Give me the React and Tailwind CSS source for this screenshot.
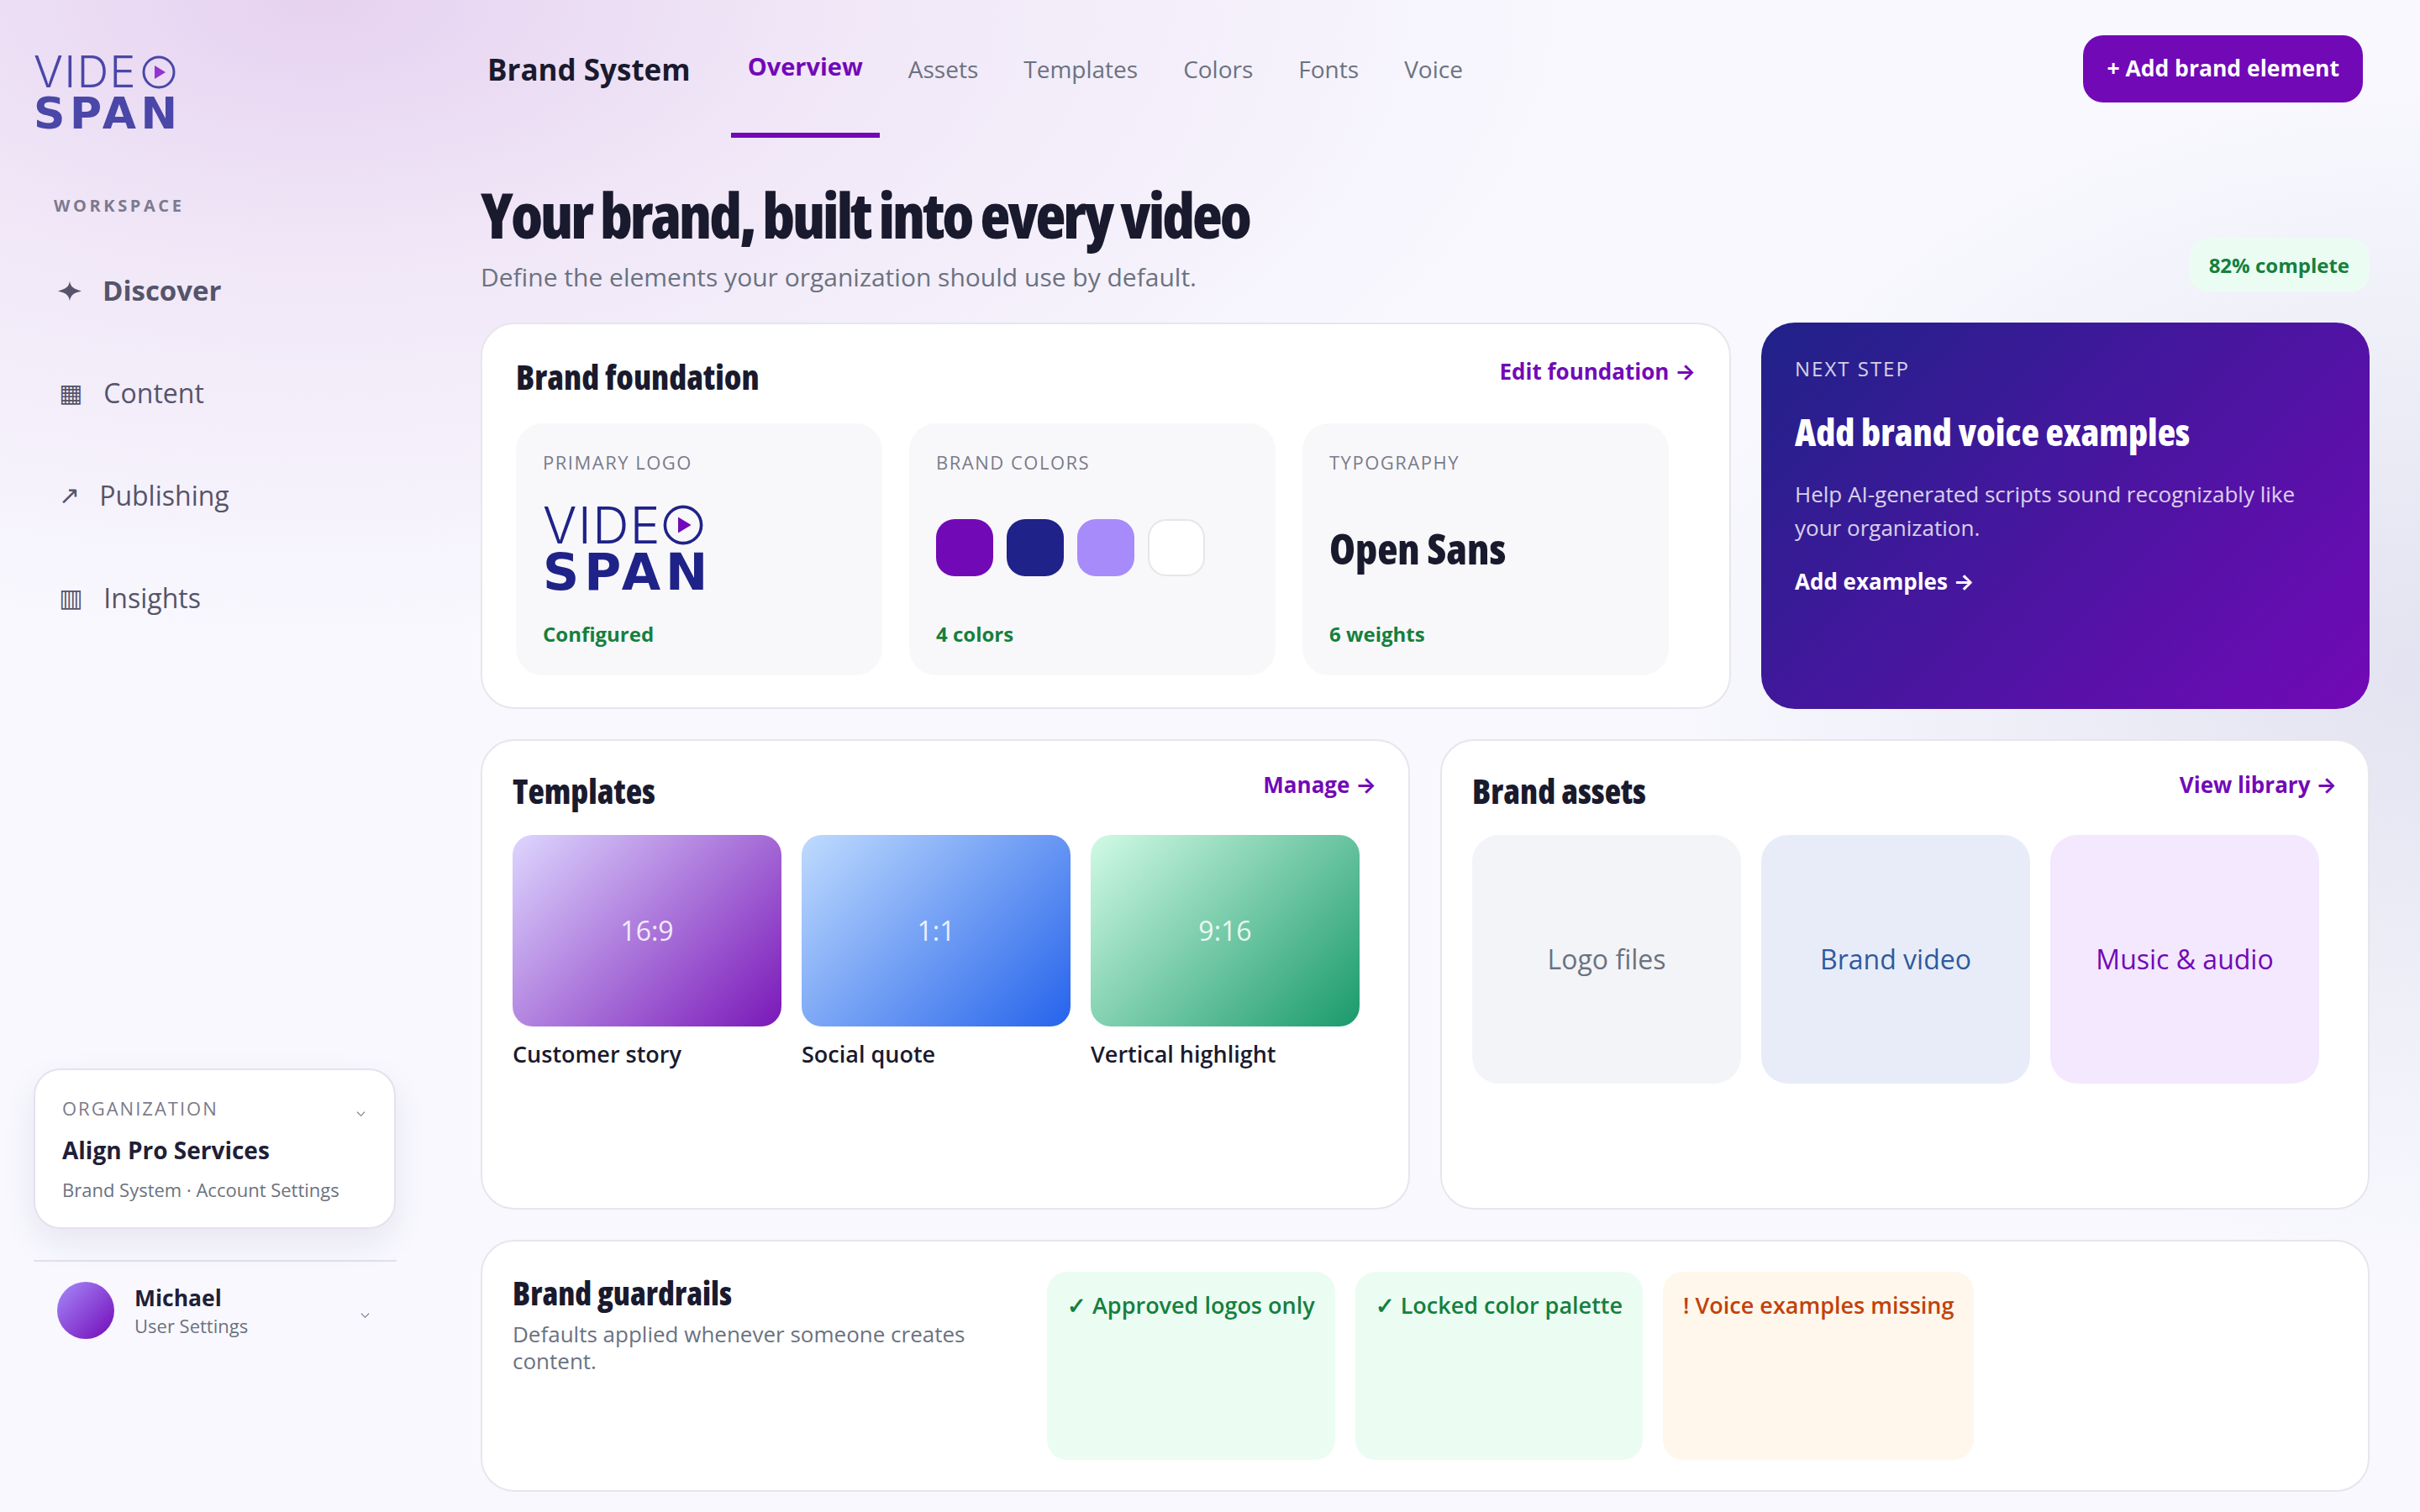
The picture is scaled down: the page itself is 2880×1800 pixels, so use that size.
const sans = "font-['Open_Sans',sans-serif]";

function Logo({ color, play, video, span, ring, svgClass }) {
  return (
    <div className={`font-['Inter',sans-serif] ${color}`}>
      <div className={`flex items-center ${video}`}>
        <span>VIDE</span>
        <svg viewBox="0 0 40 40" className={svgClass}>
          <circle cx="20" cy="20" r="18" fill="none" stroke="currentColor" strokeWidth={ring} />
          <path d="M15 12 L28 20 L15 28 Z" fill={play} />
        </svg>
      </div>
      <div className={`font-['DejaVu_Sans',sans-serif] font-bold ${span}`}>SPAN</div>
    </div>
  );
}

function Arrow() {
  return <span className="font-['Inter',sans-serif] font-bold">→</span>;
}

function Nav({ icon, label, active, gap }) {
  return (
    <div className={`flex h-[122px] items-center ${gap} pl-[30px] text-[#55546a] ${active ? "text-[33px] font-bold" : "text-[32px] font-normal"}`}>
      {icon}
      <span>{label}</span>
    </div>
  );
}

function Glyph({ children }) {
  return <span className="font-['DejaVu_Sans',sans-serif] text-[30px] font-normal leading-none">{children}</span>;
}

function Chevron({ className }) {
  return (
    <svg viewBox="0 0 12 8" className={className} fill="none" stroke="#6b7280" strokeWidth="1.2">
      <path d="M1 1.5 L6 6.5 L11 1.5" />
    </svg>
  );
}

function Tile({ label, status, children }) {
  return (
    <div className="flex h-[300px] w-[436px] flex-col rounded-[32px] bg-[#f8f8fb] px-[32px]">
      <div className="mt-[32px] text-[22px] leading-[28px] tracking-[1.5px] text-[#7b7b8a]">{label}</div>
      <div className="flex flex-1 items-center pt-[2px]">{children}</div>
      <div className="mb-[32px] text-[24px] font-bold leading-[34px] text-[#15803d]">{status}</div>
    </div>
  );
}

function Thumb({ ratio, name, grad }) {
  return (
    <div className="w-[320px]">
      <div className={`flex h-[228px] items-center justify-center rounded-[24px] text-[32px] text-white/85 ${grad}`}>{ratio}</div>
      <div className="mt-[18px] text-[27px] font-semibold leading-[30px] text-[#1a1a2e]">{name}</div>
    </div>
  );
}

function Asset({ label, cls }) {
  return (
    <div className={`flex h-[296px] w-[320px] items-center justify-center rounded-[32px] text-[32px] ${cls}`}>{label}</div>
  );
}

function Rail({ text, cls }) {
  return (
    <div className={`rounded-[24px] px-[24px] pt-[22px] text-[27px] font-semibold leading-[36px] ${cls}`}>{text}</div>
  );
}

const card = "rounded-[40px] border-2 border-[#e6e6ec] bg-white";
const h2 = "font-stretch-condensed text-[40px] font-extrabold leading-[52px] text-[#1a1a2e]";
const link = "text-[26px] font-bold leading-[34px] text-[#7209b7]";

export default function App() {
  return (
    <div className={`flex min-h-screen w-full ${sans} bg-[radial-gradient(ellipse_1500px_760px_at_380px_0px,#e6d2f0_0%,#f0e6f7_38%,rgba(248,248,254,0)_100%),radial-gradient(ellipse_900px_700px_at_2880px_800px,#e3e3f1_0%,rgba(248,248,254,0)_100%),linear-gradient(#f8f8fe,#f8f8fe)]`}>
      <aside className="flex w-[572px] shrink-0 flex-col pb-[206px] pl-[40px] pr-[100px] pt-[66px]">
        <Logo
          color="text-[#4a47a8]"
          play="#9333d0"
          video="text-[52px] font-light leading-[38px] tracking-[1.5px]"
          span="mt-[10px] text-[52px] leading-[38px] tracking-[5.5px]"
          ring="3"
          svgClass="ml-[6px] h-[40px] w-[40px]"
        />
        <div className="mt-[78px] pl-[24px] text-[20px] font-bold leading-[26px] tracking-[3.6px] text-[#7c7a8e]">WORKSPACE</div>
        <nav className="mt-[27px]">
          <Nav
            icon={
              <svg viewBox="0 0 24 20" className="h-[25px] w-[28px] -translate-x-[1px]" fill="#55546a">
                <path d="M12 0 C13 6 16 8 24 10 C16 12 13 14 12 20 C11 14 8 12 0 10 C8 8 11 6 12 0 Z" />
              </svg>
            }
            label="Discover"
            active
            gap="gap-[24px]"
          />
          <Nav icon={<Glyph>▦</Glyph>} label="Content" gap="gap-[25px]" />
          <Nav icon={<Glyph>↗</Glyph>} label="Publishing" gap="gap-[23px]" />
          <Nav icon={<Glyph>▥</Glyph>} label="Insights" gap="gap-[25px]" />
        </nav>
        <div className="mt-auto">
          <div className="relative h-[191px] w-[431px] rounded-[32px] border-2 border-[#e8dff0] bg-white px-[32px] pt-[30px] shadow-[0_16px_40px_rgba(40,30,80,0.08)]">
            <div className="text-[22px] leading-[30px] tracking-[2px] text-[#7b7b8a]">ORGANIZATION</div>
            <div className="mt-[16px] text-[28px] font-bold leading-[38px] text-[#1f2037]">Align Pro Services</div>
            <div className="mt-[12px] text-[22px] leading-[32px] text-[#6b7280]">Brand System · Account Settings</div>
            <Chevron className="absolute right-[34px] top-[48px] h-[8px] w-[11px]" />
          </div>
          <div className="mt-[37px] flex w-[432px] items-center border-t-2 border-[#e2e1ea] pl-[28px] pt-[24px]">
            <div className="h-[68px] w-[68px] shrink-0 rounded-full bg-[linear-gradient(135deg,#a78bfa,#7209b7)]" />
            <div className="ml-[24px] flex-1">
              <div className="text-[26.5px] font-bold leading-[36px] text-[#1f2037]">Michael</div>
              <div className="text-[22px] leading-[30px] text-[#6b7280]">User Settings</div>
            </div>
            <Chevron className="mr-[32px] mt-[12px] h-[8px] w-[11px]" />
          </div>
        </div>
      </aside>

      <main className="flex w-[2248px] shrink-0 flex-col">
        <header className="flex h-[164px] items-center pl-[8px] pr-[8px]">
          <div className="text-[35px] font-bold leading-none text-[#1a1a2e]">Brand System</div>
          <div className="ml-[48px] flex h-full items-center gap-[14px] self-stretch text-[28px] text-[#6b7280]">
            <div className="flex h-full items-center border-b-[6px] border-[#7209b7] px-[20px] text-[29px] font-bold text-[#7209b7]">Overview</div>
            <div className="px-[20px]">Assets</div>
            <div className="px-[20px]">Templates</div>
            <div className="px-[20px]">Colors</div>
            <div className="px-[20px]">Fonts</div>
            <div className="px-[20px]">Voice</div>
          </div>
          <button className="ml-auto h-[80px] rounded-[24px] bg-[#7209b7] px-[28px] text-[26.5px] font-bold text-white">+ Add brand element</button>
        </header>

        <section className="flex h-[220px] items-end justify-between pb-[36px]">
          <div>
            <h1 className="font-stretch-condensed text-[74px] font-black leading-[96px] tracking-[-3px] text-[#1a1a2e]">Your brand, built into every video</h1>
            <p className="-mb-[2px] mt-[6px] text-[30px] leading-[40px] text-[#6b7280]">Define the elements your organization should use by default.</p>
          </div>
          <div className="flex h-[65px] items-center rounded-[24px] bg-[#ebfcf3] px-[24px] text-[24px] font-bold text-[#15803d]">82% complete</div>
        </section>

        <div className="grid grid-cols-[1488px_724px] gap-[36px]">
          <div className={`${card} h-[460px] px-[40px] pt-[37px]`}>
            <div className="flex items-start justify-between">
              <div className={h2}>Brand foundation</div>
              <div className={`${link} pt-[2px]`}>Edit foundation <Arrow /></div>
            </div>
            <div className="mt-[29px] flex gap-[32px]">
              <Tile label="PRIMARY LOGO" status="Configured">
                <Logo
                  color="text-[#1f2388]"
                  play="#7209b7"
                  video="text-[60px] font-light leading-[44px] tracking-[1.5px]"
                  span="mt-[10px] text-[60px] leading-[44px] tracking-[6px]"
                  ring="3"
                  svgClass="ml-[2px] h-[48px] w-[48px]"
                />
              </Tile>
              <Tile label="BRAND COLORS" status="4 colors">
                <div className="flex gap-[16px]">
                  <div className="h-[68px] w-[68px] rounded-[22px] bg-[#7209b7]" />
                  <div className="h-[68px] w-[68px] rounded-[22px] bg-[#1f2288]" />
                  <div className="h-[68px] w-[68px] rounded-[22px] bg-[#a78bfa]" />
                  <div className="h-[68px] w-[68px] rounded-[22px] border-2 border-[#e5e5ea] bg-white" />
                </div>
              </Tile>
              <Tile label="TYPOGRAPHY" status="6 weights">
                <div className="mt-[2px] font-stretch-condensed text-[50px] font-extrabold leading-[60px] text-[#1a1a2e]">Open Sans</div>
              </Tile>
            </div>
          </div>

          <div className="h-[460px] rounded-[40px] bg-[linear-gradient(135deg,#1f2288,#7209b7)] px-[40px] pt-[39px] text-white">
            <div className="text-[24px] leading-[32px] tracking-[2px] text-white/80">NEXT STEP</div>
            <div className="mt-[31px] font-stretch-condensed text-[44px] font-extrabold leading-[56px]">Add brand voice examples</div>
            <div className="mt-[26px] text-[26px] leading-[40px] text-white/80">Help AI-generated scripts sound recognizably like your organization.</div>
            <div className="mt-[24px] text-[26px] font-bold leading-[40px]">Add examples <Arrow /></div>
          </div>
        </div>

        <div className="mt-[36px] grid grid-cols-2 gap-[36px]">
          <div className={`${card} h-[560px] px-[36px] pt-[34px]`}>
            <div className="flex items-start justify-between pr-[2px]">
              <div className={h2}>Templates</div>
              <div className={`${link} pt-[1px]`}>Manage <Arrow /></div>
            </div>
            <div className="mt-[26px] flex gap-[24px]">
              <Thumb ratio="16:9" name="Customer story" grad="bg-[linear-gradient(135deg,#ddd6fe,#7a18b8)]" />
              <Thumb ratio="1:1" name="Social quote" grad="bg-[linear-gradient(135deg,#bfdbfe,#2563eb)]" />
              <Thumb ratio="9:16" name="Vertical highlight" grad="bg-[linear-gradient(135deg,#d1fae5,#1a9a6c)]" />
            </div>
          </div>
          <div className={`${card} h-[560px] px-[36px] pt-[34px]`}>
            <div className="flex items-start justify-between pr-[1px]">
              <div className={h2}>Brand assets</div>
              <div className={`${link} pt-[1px]`}>View library <Arrow /></div>
            </div>
            <div className="mt-[26px] flex gap-[24px]">
              <Asset label="Logo files" cls="bg-[#f3f4f8] text-[#6b7280]" />
              <Asset label="Brand video" cls="bg-[#e8ecf8] text-[#2f5a9e]" />
              <Asset label="Music & audio" cls="bg-[#f3e8fd] text-[#7209b7]" />
            </div>
          </div>
        </div>

        <div className={`${card} mt-[36px] flex h-[300px] px-[36px] py-[36px]`}>
          <div className="w-[636px] shrink-0">
            <div className="font-stretch-condensed text-[38px] font-extrabold leading-[50px] text-[#1a1a2e]">Brand guardrails</div>
            <div className="mt-[8px] w-[600px] text-[26px] leading-[32px] text-[#6b7280]">Defaults applied whenever someone creates content.</div>
          </div>
          <div className="flex gap-[24px]">
            <Rail text="✓ Approved logos only" cls="bg-[#ebfcf3] text-[#15803d]" />
            <Rail text="✓ Locked color palette" cls="bg-[#ebfcf3] text-[#15803d]" />
            <Rail text="! Voice examples missing" cls="bg-[#fff7eb] text-[#c2410c]" />
          </div>
        </div>
      </main>
    </div>
  );
}
